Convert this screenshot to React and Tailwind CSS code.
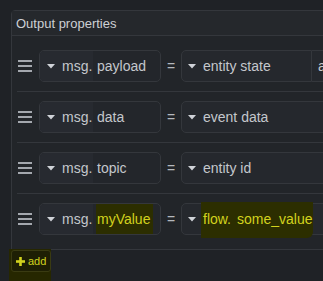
import React from "react";

// Output properties editor (node-red style typed inputs)

const Grip = () => (
  <svg width="14" height="12" viewBox="0 0 14 12" className="shrink-0">
    <rect x="0" y="0" width="14" height="2" fill="#a4a8ae" />
    <rect x="0" y="5" width="14" height="2" fill="#a4a8ae" />
    <rect x="0" y="10" width="14" height="2" fill="#a4a8ae" />
  </svg>
);

const Caret = () => (
  <svg width="8" height="5" viewBox="0 0 8 5" className="shrink-0">
    <path d="M0 0 L8 0 L4 4.5 Z" fill="#d0d3d8" />
  </svg>
);

const Plus = () => (
  <svg width="9" height="9" viewBox="0 0 9 9" className="shrink-0">
    <rect x="3.2" y="0" width="2.6" height="9" fill="#d2d21e" />
    <rect x="0" y="3.2" width="9" height="2.6" fill="#d2d21e" />
  </svg>
);

const rows = [
  { prop: "payload", value: "entity state", extra: true },
  { prop: "data", value: "event data" },
  { prop: "topic", value: "entity id" },
  { prop: "myValue", flow: "some_value", marked: true },
];

const Row = ({ row, last }) => {
  return (
    <div
      className={
        "flex items-center ml-[5px] pl-[1px] py-[9px] " +
        (last ? "" : "border-b border-[#34373c]")
      }
    >
      <Grip />
      <div className="ml-[7px] flex h-[32px] w-[122px] shrink-0 overflow-hidden rounded-[5px] border border-[#34373c] bg-[#23262b]">
        <div className="flex w-[53px] shrink-0 items-center bg-[#272a30] pl-[7px]">
          <Caret />
          <span className="ml-[7px] text-[#c4c7cc]">msg.</span>
        </div>
        <div className="flex items-center pl-[3px]">
          {row.marked ? (
            <span className="flex h-[31px] items-center bg-[#2c2e00] pl-[1px] pr-[3px] text-[#d2d21e]">
              {row.prop}
            </span>
          ) : (
            <span className="pl-[1px] text-[#c4c7cc]">{row.prop}</span>
          )}
        </div>
      </div>
      <div className="w-[20px] shrink-0 text-center text-[#b4b8bd]">=</div>
      {row.flow ? (
        <div className="relative flex h-[32px] w-[150px] shrink-0 items-center rounded-[5px] border border-[#34373c] bg-[#25282d] pl-[6px]">
          <div className="absolute left-[19px] top-[-2px] h-[36px] w-[112px] rounded-br-[6px] bg-[#2c2e00]" />
          <Caret />
          <span className="relative ml-[7px] text-[#d2d21e]">flow.</span>
          <span className="relative ml-[6px] text-[#d2d21e]">{row.flow}</span>
        </div>
      ) : (
        <div className="flex shrink-0">
          <div
            className={
              "flex h-[32px] items-center border border-[#34373c] bg-[#25282d] pl-[6px] " +
              (row.extra ? "w-[131px] rounded-l-[5px]" : "w-[150px] rounded-[5px]")
            }
          >
            <Caret />
            <span className="ml-[7px] text-[#c4c7cc]">{row.value}</span>
          </div>
          {row.extra && (
            <div className="flex h-[32px] w-[40px] items-center border-y border-r border-[#34373c] bg-[#25282d] pl-[6px] text-[#c4c7cc]">
              as
            </div>
          )}
        </div>
      )}
    </div>
  );
};

const App = () => {
  return (
    <div className="h-[281px] w-[323px] overflow-hidden bg-[#1f2226] pl-[11px] pt-[10px] font-['Liberation_Sans',Arial,sans-serif] text-[14px]">
      <div className="w-[380px] rounded-tl-[4px] border border-[#34373c] bg-[#222529]">
        <div className="h-[25px] border-b border-[#34373c] bg-[#25282c] pl-[4px] text-[13px] leading-[25px] text-[#cdd0d4]">
          Output properties
        </div>
        <div className="py-[5px]">
          {rows.map((r, i) => (
            <Row key={r.prop} row={r} last={i === rows.length - 1} />
          ))}
        </div>
      </div>
      <div className="-ml-[2px] -mt-[1px] h-[32px] w-[42px] bg-[#262700] pl-[2px] pt-[1px]">
        <div className="flex h-[22px] w-[40px] items-center rounded-[3px] border border-[#3a3b12] bg-[#1e1f04] pl-[4px] text-[11px] text-[#d2d21e]">
          <Plus />
          <span className="ml-[3px]">add</span>
        </div>
      </div>
    </div>
  );
};

export default App;
